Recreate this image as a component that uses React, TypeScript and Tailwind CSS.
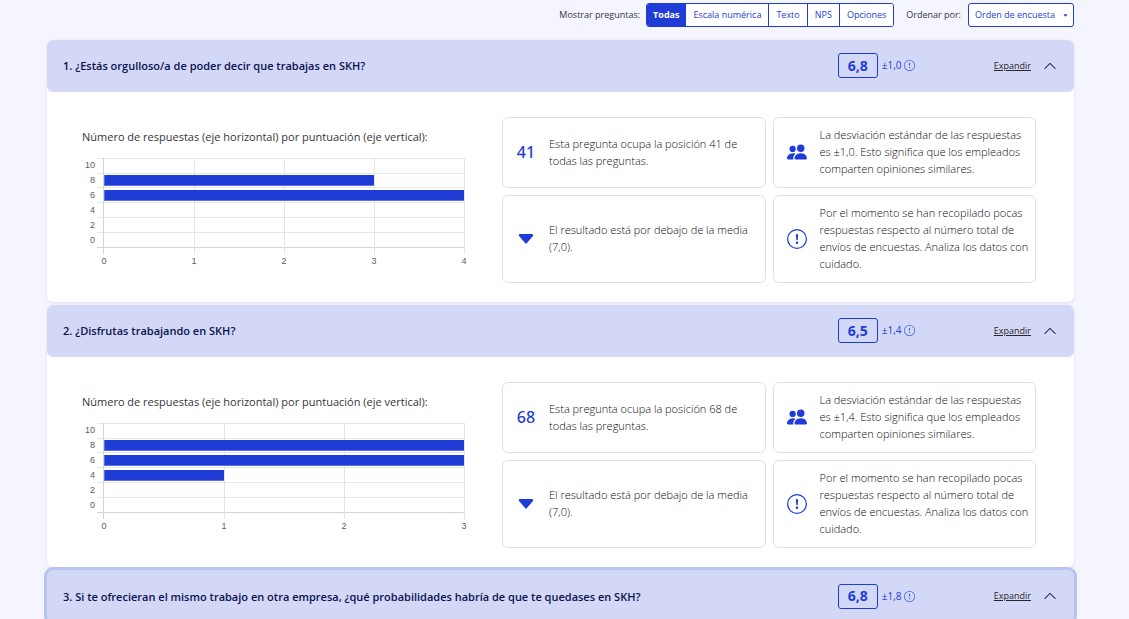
import { useState } from "react";
import type { ReactNode } from "react";
import {
  BsCaretDownFill,
  BsChevronUp,
  BsExclamationCircle,
  BsPeopleFill,
} from "react-icons/bs";

type Question = {
  id: number;
  title: string;
  score: string;
  deviation: string;
  rank?: number;
  max?: number;
  counts?: number[];
  focused?: boolean;
};

const questions: Question[] = [
  {
    id: 1,
    title: "¿Estás orgulloso/a de poder decir que trabajas en SKH?",
    score: "6,8",
    deviation: "±1,0",
    rank: 41,
    max: 4,
    counts: [0, 3, 4, 0, 0, 0],
  },
  {
    id: 2,
    title: "¿Disfrutas trabajando en SKH?",
    score: "6,5",
    deviation: "±1,4",
    rank: 68,
    max: 3,
    counts: [0, 3, 3, 1, 0, 0],
  },
  {
    id: 3,
    title:
      "Si te ofrecieran el mismo trabajo en otra empresa, ¿qué probabilidades habría de que te quedases en SKH?",
    score: "6,8",
    deviation: "±1,8",
    focused: true,
  },
];

const filters = ["Todas", "Escala numérica", "Texto", "NPS", "Opciones"];

function Chart({ counts, max }: { counts: number[]; max: number }) {
  const left = 22;
  const width = 360;
  const top = 8;
  const row = 15;
  const bottom = top + row * counts.length - 1;
  const ticks = Array.from({ length: max + 1 }, (_, i) => i);
  return (
    <svg
      viewBox="0 0 388 118"
      className="block w-[388px] max-w-full"
      role="img"
      aria-label="Número de respuestas por puntuación"
      fontFamily="Liberation Sans, Arial, sans-serif"
      fontSize="9"
      fill="#5c5c5c"
    >
      {[0, 1, 2, 3, 4, 5, 6].map((i) => {
        const y = i < 2 ? top + row * i : top + row * i - 1;
        return <rect key={i} x="15" y={y} width="368" height="1" fill={i === 6 ? "#d4d4d4" : "#e7e7e7"} />;
      })}
      {ticks.map((t) => (
        <g key={t}>
          <rect
            x={t === 0 ? left - 1 : left + (width * t) / max}
            y={top}
            width="1"
            height={bottom - top + 7}
            fill={t === 0 ? "#d4d4d4" : "#e5e5e5"}
          />
          <text x={left + (width * t) / max} y="114" textAnchor="middle">
            {t}
          </text>
        </g>
      ))}
      {counts.map((c, i) => (
        <g key={i}>
          <text x="13" y={18 + row * i} textAnchor="end">
            {10 - i * 2}
          </text>
          {c > 0 && (
            <>
              <rect x={left} y={25 + row * (i - 1)} width={(width * c) / max} height="11" fill="#5a70e2" />
              <rect x={left + 1} y={25 + row * (i - 1)} width={(width * c) / max - 1} height="10" fill="#1f3dd6" />
            </>
          )}
        </g>
      ))}
    </svg>
  );
}

function Insight({ icon, text }: { icon: ReactNode; text: string }) {
  return (
    <div className="grid grid-cols-[46px_1fr] items-center rounded-md border border-[#dfe0e6] pt-2 pr-1 pb-2.5">
      <div className="flex justify-center pt-px text-base leading-5 text-[#1f3dd6]">{icon}</div>
      <p className="text-[11px] leading-[17px] font-light text-[#0c0d10]">{text}</p>
    </div>
  );
}

function QuestionCard({ q }: { q: Question }) {
  return (
    <section className="rounded-md bg-white shadow-[0_1px_3px_rgba(0,0,0,0.1)]">
      <header
        className={
          q.focused
            ? "flex h-[52px] items-center rounded-md bg-[#d4d8f7] pr-[17px] pl-4 ring-3 ring-[#b9c3ef]"
            : "flex h-[52px] items-center rounded-md border-b border-[#d9dcee] bg-[#d4d8f7] pr-[17px] pl-4"
        }
      >
        <h2 className="flex-1 pt-0.5 text-[11px] font-semibold text-[#0a1250]">{`${q.id}. ${q.title}`}</h2>
        <div className="flex w-[156px] items-center gap-1 text-[#1f3dd6]">
          <span className="flex h-[25px] w-10 items-center justify-center rounded-[3px] border border-[#1f3dd6] text-sm font-bold">
            {q.score}
          </span>
          <span className="flex items-center gap-0.5 text-[10px]">
            {q.deviation}
            <BsExclamationCircle className="size-[11px] opacity-80" />
          </span>
        </div>
        <a href={`#pregunta-${q.id}`} className="text-[9px] text-[#26272c] underline">
          Expandir
        </a>
        <button type="button" aria-label="Contraer pregunta" className="ml-3 text-[#141b52]">
          <BsChevronUp className="size-[14px]" />
        </button>
      </header>
      {q.counts && q.max && (
        <div className="grid grid-cols-[420fr_534fr] pt-[25px] pr-[38px] pb-[19px] pl-[35px]">
          <div className="pt-3">
            <h3 className="mb-[5px] text-[11px] leading-4 font-medium text-[#35363b]">
              Número de respuestas (eje horizontal) por puntuación (eje vertical):
            </h3>
            <Chart counts={q.counts} max={q.max} />
          </div>
          <div className="grid grid-cols-2 gap-[7px]">
            <Insight
              icon={<span className="font-['Noto_Sans',sans-serif] font-medium">{q.rank}</span>}
              text={`Esta pregunta ocupa la posición ${q.rank} de todas las preguntas.`}
            />
            <Insight
              icon={<BsPeopleFill className="size-5" />}
              text={`La desviación estándar de las respuestas es ${q.deviation}. Esto significa que los empleados comparten opiniones similares.`}
            />
            <Insight
              icon={<BsCaretDownFill className="size-5" />}
              text="El resultado está por debajo de la media (7,0)."
            />
            <Insight
              icon={<BsExclamationCircle className="size-5" />}
              text="Por el momento se han recopilado pocas respuestas respecto al número total de envíos de encuestas. Analiza los datos con cuidado."
            />
          </div>
        </div>
      )}
    </section>
  );
}

export default function App() {
  const [filter, setFilter] = useState("Todas");
  return (
    <main className="min-h-screen bg-[#f4f5fe] pt-[3px] pr-[55px] pl-[47px] font-['Open_Sans','Noto_Sans',sans-serif]">
      <div className="flex h-6 items-center justify-end text-[9px] text-[#35363c]">
        <span id="filter-label" className="mr-1.5">
          Mostrar preguntas:
        </span>
        <div
          role="group"
          aria-labelledby="filter-label"
          className="flex h-6 divide-x divide-[#1f3dd6] overflow-hidden rounded-[3px] border border-[#1f3dd6]"
        >
          {filters.map((f) => (
            <button
              key={f}
              type="button"
              onClick={() => setFilter(f)}
              className={
                f === filter
                  ? "bg-[#1f3dd6] px-1.5 font-bold text-white"
                  : "bg-white px-[7px] text-[#1f3dd6]"
              }
            >
              {f}
            </button>
          ))}
        </div>
        <label htmlFor="order" className="mr-[7px] ml-3">
          Ordenar por:
        </label>
        <div className="relative">
          <select
            id="order"
            className="h-6 w-[106px] appearance-none rounded-[3px] border border-[#1f3dd6] bg-white pl-1.5 text-[9px] text-[#1f3dd6]"
          >
            <option>Orden de encuesta</option>
          </select>
          <BsCaretDownFill className="pointer-events-none absolute top-[10px] right-[6px] size-[5px] text-[#1f3dd6]" />
        </div>
      </div>
      <div className="mt-[13px] flex flex-col gap-[3px]">
        {questions.map((q) => (
          <QuestionCard key={q.id} q={q} />
        ))}
      </div>
    </main>
  );
}
